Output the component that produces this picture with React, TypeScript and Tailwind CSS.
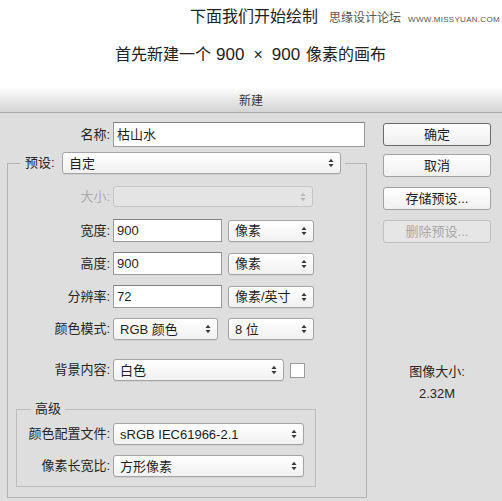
import React from 'react';

const FONT = { fontFamily: '"Liberation Sans", "Noto Sans CJK SC", sans-serif' };

function Arrows({ disabled }: { disabled?: boolean }) {
  const c = disabled ? '#b8b8b8' : '#3a3a3a';
  return (
    <svg width="6" height="10" viewBox="0 0 6 10" className="shrink-0">
      <path d="M0.5 4 L3 0.8 L5.5 4 Z" fill={c} />
      <path d="M0.5 6 L3 9.2 L5.5 6 Z" fill={c} />
    </svg>
  );
}

function Select({
  value,
  width,
  height = 22,
  disabled,
}: {
  value?: string;
  width: number;
  height?: number;
  disabled?: boolean;
}) {
  return (
    <div
      className={`flex items-center justify-between shrink-0 rounded-[3px] border pl-[6px] pr-[6px] text-[13px] ${
        disabled
          ? 'border-[#c6c6c6] bg-[#e4e4e4] text-[#aaa]'
          : 'border-[#a4a4a4] bg-gradient-to-b from-white to-[#f1f1f1] text-[#1e1e1e] shadow-[0_1px_0_rgba(0,0,0,0.06)]'
      }`}
      style={{ width, height }}
    >
      <span className="leading-none">{value}</span>
      <Arrows disabled={disabled} />
    </div>
  );
}

function Input({ value, width, height = 23 }: { value: string; width: number; height?: number }) {
  return (
    <div
      className="flex items-center shrink-0 border border-[#9a9a9a] border-t-[#808080] bg-white pl-[3px] text-[13px] text-[#1e1e1e]"
      style={{ width, height }}
    >
      {value}
    </div>
  );
}

function Row({
  label,
  labelWidth = 102,
  disabled,
  mt,
  children,
}: {
  label: string;
  labelWidth?: number;
  disabled?: boolean;
  mt: string;
  children: React.ReactNode;
}) {
  return (
    <div className={`flex items-center ${mt}`}>
      <div
        className={`shrink-0 text-right text-[13px] ${disabled ? 'text-[#acacac]' : 'text-[#262626]'}`}
        style={{ width: labelWidth }}
      >
        {label}
      </div>
      <div className="ml-[3px] flex items-center">{children}</div>
    </div>
  );
}

function Button({ label, primary, disabled, mt }: { label: string; primary?: boolean; disabled?: boolean; mt: string }) {
  return (
    <div
      className={`flex h-[23px] w-[108px] items-center justify-center rounded-[3px] text-[13px] ${mt} ${
        primary
          ? 'border-[1.5px] border-[#6a6a6a] bg-gradient-to-b from-white to-[#eeeeee] text-[#1e1e1e]'
          : disabled
          ? 'border border-[#bfbfbf] bg-[#e6e6e6] text-[#a8a8a8]'
          : 'border border-[#a2a2a2] bg-gradient-to-b from-white to-[#f0f0f0] text-[#1e1e1e]'
      }`}
    >
      {label}
    </div>
  );
}

export default function App() {
  return (
    <div className="h-[501px] w-[502px] overflow-hidden bg-white" style={FONT}>
      {/* caption */}
      <div className="h-[88px]">
        <div className="flex items-baseline pl-[190px] pt-[7px] leading-[20px]">
          <span className="text-[16px] text-[#222]">下面我们开始绘制</span>
          <span className="ml-[11px] text-[12px] text-[#555]">思缘设计论坛</span>
          <span className="ml-[7px] text-[8px] tracking-[0.3px] text-[#555]">WWW.MISSYUAN.COM</span>
        </div>
        <div className="mt-[15px] flex items-baseline pl-[115px] text-[16px] leading-[20px] text-[#222]">
          <span>首先新建一个</span>
          <span className="ml-[5px] text-[17px]">900</span>
          <span className="mx-[9px]">×</span>
          <span className="text-[17px]">900</span>
          <span className="ml-[6px]">像素的画布</span>
        </div>
      </div>

      {/* dialog title */}
      <div className="flex h-[25px] items-center justify-center border-b border-[#ababab] bg-gradient-to-b from-[#fdfdfd] to-[#d4d4d4] pt-[2px] text-[12px] text-[#3a3a3a]">
        新建
      </div>

      {/* dialog body */}
      <div className="flex h-[388px] bg-[#dedede]">
        <div className="w-[367px] shrink-0">
          <div className="mt-[9px] flex items-center">
            <div className="w-[110px] shrink-0 text-right text-[13px] text-[#262626]">名称:</div>
            <div className="ml-[3px]">
              <Input value="枯山水" width={252} height={25} />
            </div>
          </div>

          <fieldset className="ml-[7px] mt-[5px] w-[360px] border border-[#b3b3b3] pb-[10px]">
            <legend className="ml-[12px] flex items-center bg-[#dedede] pl-[5px] pr-[4px]">
              <span className="w-[32px] text-[13px] text-[#262626]">预设:</span>
              <span className="ml-[5px]">
                <Select value="自定" width={279} height={22} />
              </span>
            </legend>

            <Row label="大小:" disabled mt="mt-[12px]">
              <Select width={200} height={21} disabled />
            </Row>
            <Row label="宽度:" mt="mt-[12px]">
              <Input value="900" width={109} />
              <span className="ml-[6px]">
                <Select value="像素" width={86} />
              </span>
            </Row>
            <Row label="高度:" mt="mt-[10px]">
              <Input value="900" width={109} />
              <span className="ml-[6px]">
                <Select value="像素" width={86} />
              </span>
            </Row>
            <Row label="分辨率:" mt="mt-[10px]">
              <Input value="72" width={109} />
              <span className="ml-[6px]">
                <Select value="像素/英寸" width={86} />
              </span>
            </Row>
            <Row label="颜色模式:" mt="mt-[10px]">
              <Select value="RGB 颜色" width={105} />
              <span className="ml-[10px]">
                <Select value="8 位" width={86} />
              </span>
            </Row>
            <Row label="背景内容:" mt="mt-[19px]">
              <Select value="白色" width={171} />
              <span className="ml-[6px] block h-[15px] w-[15px] border border-[#9c9c9c] bg-white" />
            </Row>

            <fieldset className="ml-[8px] mt-[19px] w-[300px] border border-[#bdbdbd] pb-[9px]">
              <legend className="ml-[14px] bg-[#dedede] px-[4px] text-[13px] leading-[18px] text-[#262626]">高级</legend>
              <Row label="颜色配置文件:" labelWidth={93} mt="mt-[5px]">
                <Select value="sRGB IEC61966-2.1" width={191} />
              </Row>
              <Row label="像素长宽比:" labelWidth={93} mt="mt-[10px]">
                <Select value="方形像素" width={191} />
              </Row>
            </fieldset>
          </fieldset>
        </div>

        <div className="flex flex-col pl-[16px]">
          <Button label="确定" primary mt="mt-[10px]" />
          <Button label="取消" mt="mt-[8px]" />
          <Button label="存储预设..." mt="mt-[10px]" />
          <Button label="删除预设..." disabled mt="mt-[10px]" />
          <div className="mt-[120px] w-[108px] text-center text-[13px] leading-[18px] text-[#262626]">图像大小:</div>
          <div className="mt-[4px] w-[108px] text-center text-[13px] leading-[18px] text-[#262626]">2.32M</div>
        </div>
      </div>
    </div>
  );
}
